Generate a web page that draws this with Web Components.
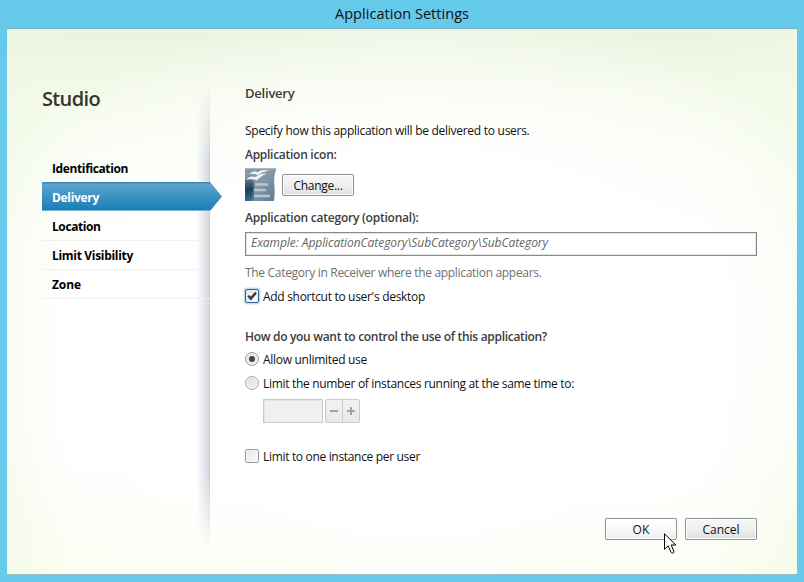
<!DOCTYPE html>
<html lang="en"><head><meta charset="utf-8"><title>Application Settings</title>
<style>
html,body{margin:0;height:100%;overflow:hidden}
body{font:12px/16px "Open Sans","Noto Sans",sans-serif;color:#111}
</style></head><body>
<settings-window></settings-window>
<script>
const define=(name,html,setup)=>customElements.define(name,class extends HTMLElement{
  connectedCallback(){
    if(this.shadowRoot)return;
    const t=document.createElement('template');t.innerHTML=html;
    this.attachShadow({mode:'open'}).append(t.content.cloneNode(true));
    if(setup)setup(this,this.shadowRoot);
  }
});

/* A single line of text whose tracking is adjusted to a given measure. */
define('fit-text',`<style>:host{display:block;white-space:nowrap;width:max-content}span{display:inline-block}</style><span><slot></slot></span>`,
(el,root)=>{
  const s=root.querySelector('span'),w=+el.getAttribute('measure');
  if(w){const n=el.textContent.length;s.style.letterSpacing=(w-s.getBoundingClientRect().width)/n+'px';}
});

define('push-button',`<style>
:host{display:flex;box-sizing:border-box;width:72px;height:22px;border:1px solid #929497;border-radius:2px;
 background:linear-gradient(#f7f7f7,#eeefef 50%,#dfe1e3);box-shadow:inset 0 0 0 1px #fafafa,0 0 1px #aaa8;justify-content:center;align-items:center;padding-top:2px}
:host([hot]){background:linear-gradient(#fff,#fafafa 50%,#eceeef)}
</style><slot></slot>`);

define('check-option',`<style>
:host{display:flex;gap:4px;height:16px}
i{box-sizing:border-box;width:14px;height:14px;margin-top:1px;border:1px solid #999;border-radius:2px;background:linear-gradient(135deg,#e6e8e9,#fafafa);box-shadow:inset 0 0 0 1px #f6f6f6}
svg{display:none}
::slotted(*){padding-top:1px}
:host([checked]) i{border-color:#29629c;box-shadow:0 0 0 1px #c4dcec,0 0 2px 1px #a8cae2}
:host([checked]) svg{display:block}
</style><i><svg width="12" height="12" viewBox="0 0 12 12"><path d="M2.2 5.7 4.8 8.6 10 2.6" fill="none" stroke="#3b3b3b" stroke-width="2.4"/></svg></i><slot></slot>`);

define('radio-option',`<style>
:host{display:flex;gap:4px;height:16px}
i{box-sizing:border-box;width:14px;height:14px;margin-top:1px;border:1px solid #aaa;border-radius:50%;background:linear-gradient(135deg,#dcdedf,#f4f4f4);box-shadow:inset 0 0 0 1px #f3f3f3;display:grid;place-items:center}
::slotted(*){padding-top:1px}
:host([checked]) i{border-color:#999}
:host([checked]) i::after{content:"";width:6px;height:6px;border-radius:50%;background:#444}
</style><i></i><slot></slot>`);

define('number-stepper',`<style>
:host{display:flex;gap:2px;height:24px}
.f{box-sizing:border-box;width:60px;border:1px solid #c9c9c9;background:#f0f0f0;box-shadow:inset 1px 1px #e4e4e4}
.b{box-sizing:border-box;width:35px;border:1px solid #cacaca;border-radius:2px;background:linear-gradient(#f2f2f2,#e7e9e9);display:grid;grid-template-columns:16px 1fr}
svg{width:100%;height:22px}svg+svg{border-left:1px solid #cacaca;box-sizing:border-box}
</style><div class="f"></div><div class="b"><svg viewBox="0 0 16 22"><path d="M4 11h8" stroke="#a3a3a3" stroke-width="2"/></svg><svg viewBox="0 0 16 22"><path d="M4 11h8M8 7v8" stroke="#a3a3a3" stroke-width="2"/></svg></div>`);

define('text-field',`<style>
:host{display:flex;box-sizing:border-box;height:24px;border:1px solid #898c8f;outline:1px solid #c8c8c880;outline-offset:-2px;background:#fff;padding:2px 0 0 5px;color:#666;font-style:italic}
</style><slot></slot>`);

define('document-icon',`<style>:host{display:block;width:32px;height:33px}svg{display:block}</style>
<svg width="32" height="33" viewBox="0 0 32 33"><defs>
<linearGradient id="p" x1="0" y1="0" x2="1" y2="1"><stop offset="0" stop-color="#8496a3"/><stop offset=".45" stop-color="#8499a8"/><stop offset="1" stop-color="#5d7b91"/></linearGradient>
<linearGradient id="d" x1="0" y1="0" x2="0" y2="1"><stop offset="0" stop-color="#5f7787"/><stop offset=".5" stop-color="#1b4259"/><stop offset="1" stop-color="#3c6781"/></linearGradient></defs>
<path d="M0 .5H31.500Q28.500 7 29.300 16T29 33H0Z" fill="url(#p)"/>
<path d="M0 11Q5 9 7.500 13Q9 22 6 33H0Z" fill="url(#d)"/>
<path d="M7.500 33Q9.500 22 8 13" fill="none" stroke="#466a80" stroke-width="1.500"/>
<path d="M0 .8H31" stroke="#a2b0ba"/>
<path d="M10 16.500h13M9 22h12M9 28h16" stroke="#b4c6d4" stroke-width="2.500"/>
<path d="M4 6.200Q9 1.500 12.500 4.200Q17 1 24 2.600Q17 4 12.500 7.200Q9 4.700 4 6.200ZM1 12.200Q5 7 10.500 9Q15 5.500 21.500 5.600Q16 8 11.500 12.400Q7.500 9.800 1 12.200Z" fill="#f0f4f5"/>
</svg>`);

define('nav-item',`<style>
:host{display:flex;box-sizing:border-box;height:29px;width:156px;padding:7px 0 0 10px;border-bottom:1px solid #f0f0f1;font-weight:700;color:#000}
:host([last]){width:168px}
:host([active]){width:180px;margin-top:-1px;height:30px;padding-top:8px;border:0;color:#fff;background:linear-gradient(#4288b1 0,#4288b1 1px,#5ba5cf 2px,#1b80b7 27px,#1b80b7 28px,#75b3d4 28px,#75b3d4 29px,transparent 29px);clip-path:polygon(0 0,168px 0,100% 14.5px,168px 29px,168px 30px,0 30px)}
</style><slot></slot>`);

define('side-nav',`<style>
:host{display:block;position:relative;width:168px;height:465px}
.shade{position:absolute;right:0;top:0;width:14px;height:100%;background:linear-gradient(90deg,#cdd3db00,#cdd3db50 35%,#ccd2dad0 90%,#c0c5cb);-webkit-mask:linear-gradient(transparent,#000 17%,#000 84%,transparent)}
h1{margin:0;font-size:20px;line-height:27px;font-weight:600;color:#333;height:41px}
nav{position:relative;display:flex;flex-direction:column;padding-top:28px}
</style><div class="shade"></div><h1><fit-text measure="58">Studio</fit-text></h1>
<nav><nav-item><fit-text measure="76">Identification</fit-text></nav-item>
<nav-item active><fit-text measure="47">Delivery</fit-text></nav-item>
<nav-item><fit-text measure="48.5">Location</fit-text></nav-item>
<nav-item><fit-text measure="81">Limit Visibility</fit-text></nav-item>
<nav-item last><fit-text measure="29">Zone</fit-text></nav-item></nav>`);

define('delivery-page',`<style>
:host{display:flex;flex-direction:column;width:512px}
.b{font-weight:600;color:#3c3c3c;height:16px}
.h{font-size:13px;margin-bottom:22px}
.icon{display:flex;gap:5px;margin:5px 0 9px;height:33px}.icon push-button{margin-top:6px}
.hint{color:#707070;margin:9px 0 7px}
</style>
<fit-text class="b h" measure="49.5">Delivery</fit-text>
<fit-text measure="284.5">Specify how this application will be delivered to users.</fit-text>
<fit-text class="b" style="margin-top:8px" measure="91.5">Application icon:</fit-text>
<div class="icon"><document-icon></document-icon><push-button><fit-text measure="49">Change...</fit-text></push-button></div>
<fit-text class="b" style="margin-bottom:6px" measure="173.5">Application category (optional):</fit-text>
<text-field><fit-text measure="297">Example: ApplicationCategory\\SubCategory\\SubCategory</fit-text></text-field>
<fit-text class="hint" measure="296.5">The Category in Receiver where the application appears.</fit-text>
<check-option checked><fit-text measure="162">Add shortcut to user's desktop</fit-text></check-option>
<fit-text class="b" style="margin:25px 0 6px" measure="302">How do you want to control the use of this application?</fit-text>
<radio-option checked><fit-text measure="104">Allow unlimited use</fit-text></radio-option>
<radio-option style="margin:8px 0"><fit-text measure="311">Limit the number of instances running at the same time to:</fit-text></radio-option>
<number-stepper style="margin:0 0 25px 18px"></number-stepper>
<check-option><fit-text measure="157">Limit to one instance per user</fit-text></check-option>`);

define('mouse-pointer',`<style>:host{position:absolute;left:664px;top:533px}svg{display:block}</style>
<svg width="13" height="22" viewBox="0 0 13 22"><path d="M.5.8V16.300L4.200 12.800 7 19.300Q7.500 20.500 8.900 20.100Q10.300 19.500 9.800 18.200L7.200 12H11.800Z" fill="#fff" stroke="#000"/></svg>`);

define('settings-window',`<style>
:host{display:flex;flex-direction:column;box-sizing:border-box;width:804px;height:582px;background:#66caea;padding:0 7px 7px;position:relative}
header{height:28px;display:flex;justify-content:center;padding-top:4px;box-sizing:border-box;font-size:14.500px;line-height:20px;color:#111}
main{flex:1;box-sizing:border-box;border-top:1px solid #78b0c9;border-bottom:1px solid #92bfc0;padding:56px 40px 0 35px;display:grid;grid-template-columns:168px 512px;grid-template-rows:433px auto;column-gap:35px;
 background:radial-gradient(ellipse 480px 330px at 52% 55%,#fff 0,#fff 50%,#ffffff00 100%),linear-gradient(90deg,#eef7e180,#fff0 8%,#fff0 88%,#f1f9e480),linear-gradient(#ebf3df,#f4faea 12%,#fafef4 25%,#fefffc 38%,#fff 50%,#fff 75%,#fbfef2)}
side-nav{grid-row:1/3}
footer{grid-column:2;display:flex;justify-content:flex-end;gap:8px}
</style><header><fit-text measure="134">Application Settings</fit-text></header>
<main><side-nav></side-nav><delivery-page></delivery-page>
<footer><push-button hot><fit-text measure="17">OK</fit-text></push-button><push-button><fit-text measure="37">Cancel</fit-text></push-button></footer></main><mouse-pointer></mouse-pointer>`);
</script></body></html>
